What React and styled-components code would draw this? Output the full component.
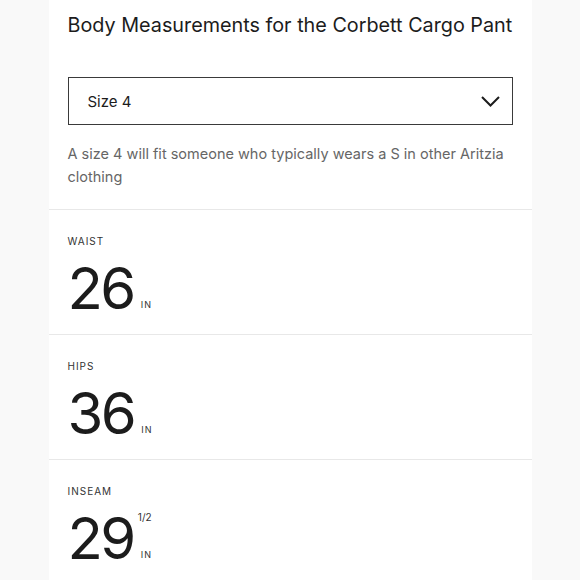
import React from 'react'
import styled, { createGlobalStyle } from 'styled-components'

const GlobalStyle = createGlobalStyle`
    body {
        margin: 0;
        background: #f9f9f9;
        font-family: Inter, "Noto Sans", sans-serif;
        color: #1c1c1c;
    }
`

const measurements = [
    { label: 'WAIST', value: '26' },
    { label: 'HIPS', value: '36' },
    { label: 'INSEAM', value: '29', fraction: '1/2' },
]

function App() {
    return (
        <>
            <GlobalStyle />
            <Card>
                <Intro>
                    <Title>Body Measurements for the Corbett Cargo Pant</Title>
                    <Select>
                        <span>Size 4</span>
                        <svg width="19" height="11" viewBox="0 0 19 11" fill="none">
                            <path d="M1 1l8.5 8.5L18 1" stroke="#1c1c1c" strokeWidth="2" />
                        </svg>
                    </Select>
                    <Note>
                        A size 4 will fit someone who typically wears a S in other Aritzia clothing
                    </Note>
                </Intro>
                {measurements.map((m) => (
                    <Section key={m.label}>
                        <Label>{m.label}</Label>
                        <ValueRow>
                            <Value>{m.value}</Value>
                            <Units>
                                <Fraction>{m.fraction}</Fraction>
                                <Unit>IN</Unit>
                            </Units>
                        </ValueRow>
                    </Section>
                ))}
            </Card>
        </>
    )
}

export default App

const Card = styled.div`
    width: 483px;
    margin: 0 auto;
    background: #fff;
    min-height: 580px;
`

const Intro = styled.div`
    padding: 12px 19px 21px 19px;
`

const Title = styled.h1`
    margin: 0;
    font-size: 19.8px;
    font-weight: 400;
    line-height: 26px;
    white-space: nowrap;
    color: #1c1c1c;
`

const Select = styled.div`
    margin-top: 39px;
    height: 48px;
    box-sizing: border-box;
    border: 1.5px solid #3a3a3a;
    display: flex;
    align-items: center;
    justify-content: space-between;
    padding: 0 12px 0 19px;
    font-size: 15px;
    color: #1c1c1c;
`

const Note = styled.p`
    margin: 17px 0 0 0;
    font-size: 14.5px;
    line-height: 23px;
    color: #666;
`

const Section = styled.div`
    border-top: 1px solid #e8e8e8;
    height: 125px;
    box-sizing: border-box;
    padding: 25px 19px 0 19px;
`

const Label = styled.div`
    font-size: 10px;
    letter-spacing: 1px;
    color: #333;
`

const ValueRow = styled.div`
    display: flex;
    align-items: stretch;
    margin-top: 16px;
`

const Value = styled.div`
    font-size: 58px;
    line-height: 50px;
    letter-spacing: -2.5px;
    color: #1c1c1c;
`

const Units = styled.div`
    display: flex;
    flex-direction: column;
    justify-content: space-between;
    align-items: flex-start;
    margin-left: 7px;
    padding-bottom: 3px;
`

const Fraction = styled.div`
    font-size: 10px;
    line-height: 10px;
    margin-top: -1px;
    margin-left: -3px;
    color: #333;
`

const Unit = styled.div`
    font-size: 9px;
    line-height: 10px;
    letter-spacing: 1px;
    color: #333;
`
